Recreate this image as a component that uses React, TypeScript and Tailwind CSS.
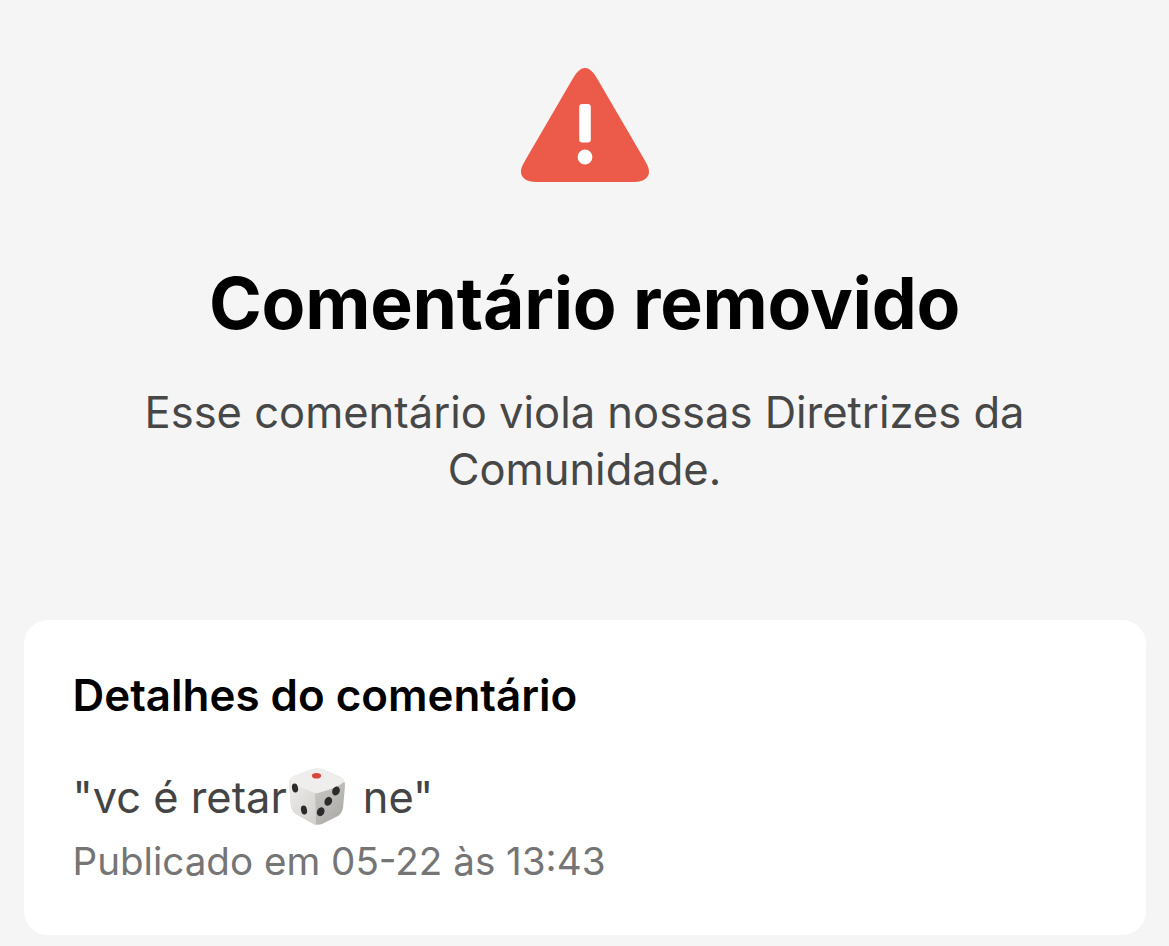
export default function App() {
  const font = { fontFamily: 'Inter, "Liberation Sans", sans-serif' };
  return (
    <div className="w-[1169px] h-[946px] overflow-hidden bg-[#f5f5f5] flex flex-col items-center" style={font}>
      <svg width="130" height="116" viewBox="0 0 130 116" className="mt-[67px] shrink-0">
        <path d="M52 13 C57 4 61 1 65 1 C69 1 73 4 78 13 L124 92 C128 99 129 101 129 105 C129 111 123 115 114 115 L16 115 C7 115 1 111 1 105 C1 101 2 99 6 92 Z" fill="#ec5a49" />
        <rect x="59.2" y="37" width="11.6" height="38.5" rx="3" fill="#fff" />
        <circle cx="65" cy="90" r="7.4" fill="#fff" />
      </svg>
      <h1 className="mt-[78px] text-[71.5px] leading-[84px] font-bold text-black tracking-[-0.25px] whitespace-nowrap">Comentário removido</h1>
      <p className="mt-[39px] w-[950px] text-center text-[43.5px] leading-[57px] text-[#474747]">Esse comentário viola nossas Diretrizes da Comunidade.</p>
      <div className="mt-[122px] w-[1122px] h-[315px] shrink-0 rounded-[24px] bg-white pl-[49px] pt-[47px]">
        <div className="text-[43.9px] leading-[56px] font-semibold text-black whitespace-nowrap">Detalhes do comentário</div>
        <div className="mt-[44px] flex items-center text-[43.4px] leading-[60px] text-[#444] whitespace-nowrap">
          <span>"vc é retar</span>
          <svg width="60" height="60" viewBox="0 0 60 60" className="shrink-0">
            <defs>
              <linearGradient id="diceLeft" x1="0" y1="0" x2="1" y2="1">
                <stop offset="0" stopColor="#eeedeb" />
                <stop offset="1" stopColor="#d2d0cd" />
              </linearGradient>
              <linearGradient id="diceRight" x1="0" y1="0" x2="1" y2="1">
                <stop offset="0" stopColor="#dcdbd8" />
                <stop offset="1" stopColor="#a9a7a4" />
              </linearGradient>
            </defs>
            <path d="M23 3 Q30 0 37 3 L53 10 Q58 12 58 19 L56 41 Q55 46 51 49 L35 57 Q30 59 25 56 L9 47 Q5 44 4 40 L2 16 Q2 11 7 9 Z" fill="url(#diceRight)" />
            <path d="M3 13 Q8 19 28 26 Q29 41 29 58 Q27 58 25 56 L9 47 Q5 44 4 40 L2 16 Z" fill="url(#diceLeft)" />
            <path d="M23 3 Q30 0 37 3 L53 10 Q58 12 57 15 Q50 21 31 26 Q28 27 25 25 Q8 19 3 14 Q3 10 7 9 Z" fill="#efeeec" />
            <ellipse cx="29.5" cy="8.7" rx="4.6" ry="2.8" fill="#d9463c" />
            <ellipse cx="8" cy="21" rx="3" ry="4.6" fill="#2b2b2b" transform="rotate(-10 8 21)" />
            <ellipse cx="17" cy="43" rx="3" ry="4.6" fill="#2b2b2b" transform="rotate(-10 17 43)" />
            <ellipse cx="49" cy="24" rx="3.7" ry="4.6" fill="#2b2b2b" transform="rotate(25 49 24)" />
            <ellipse cx="41.3" cy="34.3" rx="3.7" ry="4.6" fill="#2b2b2b" transform="rotate(25 41.3 34.3)" />
            <ellipse cx="33.7" cy="44.7" rx="3.7" ry="4.6" fill="#2b2b2b" transform="rotate(25 33.7 44.7)" />
          </svg>
          <span className="ml-[16px]">ne"</span>
        </div>
        <div className="mt-[9px] text-[38.6px] leading-[50px] text-[#757575] whitespace-nowrap">Publicado em 05-22 às 13:43</div>
      </div>
    </div>
  );
}
